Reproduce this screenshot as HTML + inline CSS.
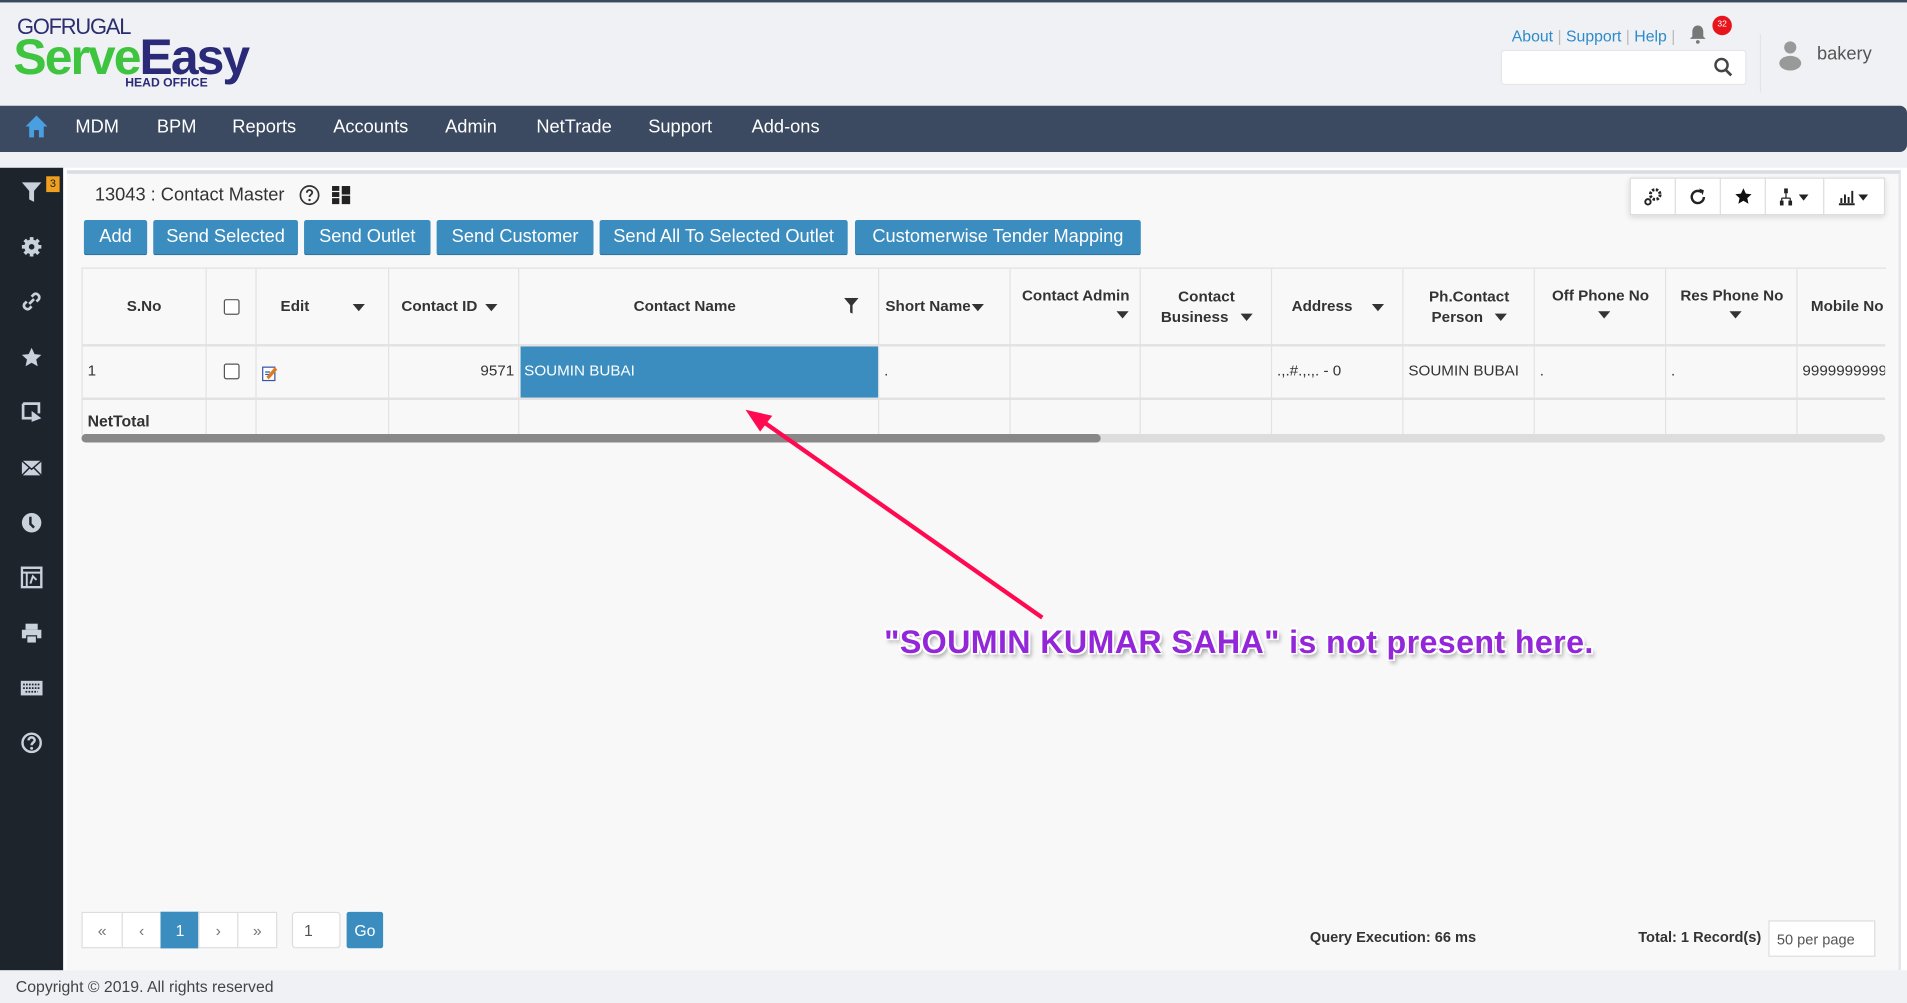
<!DOCTYPE html>
<html><head><meta charset="utf-8"><style>
html,body{margin:0;padding:0;width:1907px;height:1003px;overflow:hidden;background:#eff1f5}
#w{position:absolute;left:0;top:0;width:1568px;height:825px;transform:scale(1.21620,1.21576);transform-origin:0 0;font-family:"Liberation Sans",sans-serif;color:#333;background:#eff1f5}
.a{position:absolute}
.btn{position:absolute;top:181px;height:28px;background:#3a8dbe;color:#fff;font-size:15px;line-height:28px;text-align:center;border-radius:2px;border-bottom:1px solid #2c6f99}
.nav span{position:absolute;top:96px;color:#fff;font-size:15px}
.th{position:absolute;top:221px;height:63px;font-size:12.5px;font-weight:bold;color:#333;text-align:center;display:flex;align-items:center;justify-content:center;line-height:17px}
.vl{position:absolute;top:221px;height:136px;width:1px;background:#e2e2e2}
.tri{display:inline-block;border-left:5px solid transparent;border-right:5px solid transparent;border-top:6px solid #333;margin-left:6px;vertical-align:middle}
.td{position:absolute;top:298px;font-size:12.5px;color:#333}
.pg{position:absolute;top:750px;height:30px;border:1px solid #ddd;background:#fff;color:#777;font-size:13px;line-height:30px;text-align:center;box-sizing:border-box}
.si{position:absolute;left:17px;width:18px;height:18px}
.tb{position:absolute;top:146px;height:31px;border-right:1px solid #ddd;display:flex;align-items:center;justify-content:center}
</style></head><body><div id="w">
<div class="a" style="left:0;top:0;width:1568px;height:2px;background:#3b4a60"></div>
<div class="a" style="left:14px;top:12px;font-size:18px;color:#2b2d6e;letter-spacing:-1px">GOFRUGAL</div>
<div class="a" style="left:11px;top:25px;font-size:41px;font-weight:bold;letter-spacing:-1.6px;line-height:44px"><span style="color:#3ec43e">Serve</span><span style="color:#2b2a78">Easy</span></div>
<div class="a" style="left:103px;top:63px;font-size:10px;font-weight:bold;color:#2b2a78">HEAD OFFICE</div>
<div class="a" style="left:1243px;top:22px;font-size:13px;color:#2e8bc9">About <span style="color:#bbb">|</span> Support <span style="color:#bbb">|</span> Help <span style="color:#bbb">|</span></div>
<svg class="a" style="left:1389px;top:20px" width="14" height="16" viewBox="0 0 14 16"><path d="M7 1c3 0 4.5 2.5 4.5 5v4l2 2H.5l2-2V6C2.5 3.5 4 1 7 1z" fill="#777"/><circle cx="7" cy="14.5" r="1.5" fill="#777"/></svg>
<div class="a" style="left:1408px;top:13px;width:16px;height:16px;border-radius:8px;background:#e8141b;color:#fff;font-size:7px;line-height:16px;text-align:center">32</div>
<div class="a" style="left:1234px;top:41px;width:202px;height:29px;background:#fff;border:1px solid #e4e6ea;border-radius:3px;box-sizing:border-box"></div>
<svg class="a" style="left:1409px;top:47px" width="16" height="17" viewBox="0 0 16 17"><circle cx="6.5" cy="6.5" r="5" stroke="#444" stroke-width="2" fill="none"/><path d="M10 10.5l4.5 4.5" stroke="#444" stroke-width="2.2"/></svg>
<div class="a" style="left:1447px;top:28px;width:1px;height:48px;background:#e2e4e8"></div>
<svg class="a" style="left:1462px;top:33px" width="20" height="25" viewBox="0 0 20 25"><circle cx="10" cy="6" r="5" fill="#999"/><ellipse cx="10" cy="19" rx="9" ry="6" fill="#999"/></svg>
<div class="a" style="left:1494px;top:36px;font-size:15px;color:#555">bakery</div>
<div class="a nav" style="left:0;top:87px;width:1568px;height:38px;background:#3b4a60;border-radius:0 6px 6px 0"></div>
<svg class="a" style="left:20px;top:94px" width="20" height="20" viewBox="0 0 20 20"><path d="M10 1L1 10h3v9h4v-6h4v6h4v-9h3z" fill="#4a9fe0"/></svg>
<div class="nav"><span style="left:62px">MDM</span><span style="left:129px">BPM</span><span style="left:191px">Reports</span><span style="left:274px">Accounts</span><span style="left:366px">Admin</span><span style="left:441px">NetTrade</span><span style="left:533px">Support</span><span style="left:618px">Add-ons</span></div>
<div class="a" style="left:0;top:138px;width:52px;height:660px;background:#1e242b"></div>
<div class="a" style="left:52px;top:138px;width:1516px;height:660px;background:#fff"></div>
<svg class="si" style="top:149px" viewBox="0 0 18 18"><path d="M1 1h16l-6 7v9l-4-2V8z" fill="#c9d2dc"/></svg>
<div class="a" style="left:38px;top:145px;width:11px;height:13px;background:#f0a020;color:#222;font-size:9px;text-align:center;line-height:13px">3</div>
<svg class="si" style="top:194px" viewBox="0 0 18 18"><circle cx="9" cy="9" r="6" fill="#c9d2dc"/><path d="M9 1v16M1 9h16M3.3 3.3l11.4 11.4M14.7 3.3L3.3 14.7" stroke="#c9d2dc" stroke-width="3"/><circle cx="9" cy="9" r="2.3" fill="#1e242b"/></svg>
<svg class="si" style="top:239px" viewBox="0 0 18 18"><path d="M7 11l4-4M5 9l-2 2a3 3 0 004 4l2-2M13 9l2-2a3 3 0 00-4-4L9 5" stroke="#c9d2dc" stroke-width="2.2" fill="none"/></svg>
<svg class="si" style="top:285px" viewBox="0 0 18 18"><path d="M9 1l2.4 5.3 5.6.6-4.2 3.8 1.2 5.6L9 13.4 4 16.3l1.2-5.6L1 6.9l5.6-.6z" fill="#c9d2dc"/></svg>
<svg class="si" style="top:330px" viewBox="0 0 18 18"><path d="M2 2h13v8M2 2v12h7" stroke="#c9d2dc" stroke-width="2.2" fill="none"/><path d="M9 8l8 6-8 3z" fill="#c9d2dc"/></svg>
<svg class="si" style="top:376px" viewBox="0 0 18 18"><rect x="1" y="3" width="16" height="12" fill="#c9d2dc"/><path d="M1 3l8 7 8-7M1 15l6-6M17 15l-6-6" stroke="#1e242b" stroke-width="1.2" fill="none"/></svg>
<svg class="si" style="top:421px" viewBox="0 0 18 18"><circle cx="9" cy="9" r="8" fill="#c9d2dc"/><path d="M8 4v6l3 3" stroke="#1e242b" stroke-width="2" fill="none"/></svg>
<svg class="si" style="top:466px" viewBox="0 0 18 18"><rect x="1" y="1" width="16" height="16" stroke="#c9d2dc" stroke-width="2" fill="none"/><path d="M1 5h16M5 5v12M8 14l2-6 3 3" stroke="#c9d2dc" stroke-width="1.6" fill="none"/></svg>
<svg class="si" style="top:512px" viewBox="0 0 18 18"><rect x="4" y="1" width="10" height="5" fill="#c9d2dc"/><rect x="1" y="6" width="16" height="7" fill="#c9d2dc"/><rect x="5" y="11" width="8" height="6" fill="#c9d2dc" stroke="#1e242b"/></svg>
<svg class="si" style="top:557px" viewBox="0 0 18 18"><rect x="0" y="3" width="18" height="12" fill="#c9d2dc"/><path d="M2 6h14M2 9h14M4 12h10" stroke="#1e242b" stroke-dasharray="1.4 1" stroke-width="1.4"/></svg>
<svg class="si" style="top:602px" viewBox="0 0 18 18"><circle cx="9" cy="9" r="7.5" stroke="#c9d2dc" stroke-width="2" fill="none"/><path d="M6.5 7a2.5 2.5 0 115 0c0 1.5-2.5 2-2.5 4" stroke="#c9d2dc" stroke-width="2" fill="none"/><circle cx="9" cy="13.5" r="1.2" fill="#c9d2dc"/></svg>
<div class="a" style="left:55px;top:140px;width:1508px;height:658px;background:#f8f8f8;border-top:3px solid #d9dde2;border-right:2px solid #e4e6ea;box-sizing:border-box"></div>
<div class="a" style="left:78px;top:152px;font-size:15px;color:#333">13043 : Contact Master</div>
<svg class="a" style="left:246px;top:152px" width="17" height="17" viewBox="0 0 17 17"><circle cx="8.5" cy="8.5" r="7.5" stroke="#333" stroke-width="1.4" fill="none"/><path d="M6.3 6.5a2.2 2.2 0 114.4 0c0 1.4-2.2 1.8-2.2 3.5" stroke="#333" stroke-width="1.5" fill="none"/><circle cx="8.5" cy="12.5" r="1" fill="#333"/></svg>
<svg class="a" style="left:273px;top:153px" width="15" height="15" viewBox="0 0 15 15"><rect x="0" y="0" width="6" height="4" fill="#222"/><rect x="0" y="5" width="6" height="4" fill="#222"/><rect x="0" y="10" width="6" height="5" fill="#222"/><rect x="8" y="0" width="7" height="7" fill="#222"/><rect x="8" y="8" width="7" height="7" fill="#222"/></svg>
<div class="a" style="left:1340px;top:146px;width:210px;height:31px;background:#fff;border:1px solid #ddd;box-shadow:0 2px 5px rgba(0,0,0,.15);box-sizing:border-box"></div>
<div class="tb" style="left:1340px;width:37px"><svg width="16" height="16" viewBox="0 0 16 16"><circle cx="10" cy="6" r="4" fill="none" stroke="#222" stroke-width="2.4" stroke-dasharray="2 1.2"/><circle cx="4" cy="12" r="2.2" fill="none" stroke="#222" stroke-width="1.6"/></svg></div>
<div class="tb" style="left:1378px;width:36px"><svg width="16" height="16" viewBox="0 0 16 16"><path d="M13 8a5 5 0 11-2-4" stroke="#222" stroke-width="2" fill="none"/><path d="M9 1l4 1.5-1 4z" fill="#222"/></svg></div>
<div class="tb" style="left:1415px;width:36px"><svg width="15" height="15" viewBox="0 0 18 18"><path d="M9 1l2.4 5.3 5.6.6-4.2 3.8 1.2 5.6L9 13.4 4 16.3l1.2-5.6L1 6.9l5.6-.6z" fill="#111"/></svg></div>
<div class="tb" style="left:1452px;width:47px"><svg width="26" height="16" viewBox="0 0 26 16"><rect x="4" y="1" width="3" height="4" fill="#222"/><path d="M5.5 5v4M2 9h7M2 9v2M9 9v2" stroke="#222"/><rect x="0.5" y="11" width="3" height="4" fill="#222"/><rect x="7.5" y="11" width="3" height="4" fill="#222"/><path d="M16 6h8l-4 5z" fill="#222"/></svg></div>
<div class="tb" style="left:1500px;width:49px;border:none"><svg width="28" height="16" viewBox="0 0 28 16"><path d="M1 14h13M3 13V9M6 13V6M9 13V8M12 13V3" stroke="#222" stroke-width="1.6"/><path d="M17 6h8l-4 5z" fill="#222"/></svg></div>
<div class="btn" style="left:69px;width:52px">Add</div>
<div class="btn" style="left:126px;width:119px">Send Selected</div>
<div class="btn" style="left:250px;width:104px">Send Outlet</div>
<div class="btn" style="left:359px;width:129px">Send Customer</div>
<div class="btn" style="left:493px;width:204px">Send All To Selected Outlet</div>
<div class="btn" style="left:703px;width:235px">Customerwise Tender Mapping</div>
<div class="a" style="left:67px;top:220px;width:1483px;height:137px;background:#f8f8f8;border-top:1px solid #e2e2e2;border-left:1px solid #e2e2e2"></div>
<div class="a" style="left:67px;top:283px;width:1483px;height:2px;background:#e2e2e2"></div>
<div class="a" style="left:67px;top:327px;width:1483px;height:2px;background:#e2e2e2"></div>
<div class="vl" style="left:169px"></div><div class="vl" style="left:210px"></div><div class="vl" style="left:319px"></div><div class="vl" style="left:426px"></div><div class="vl" style="left:722px"></div><div class="vl" style="left:830px"></div><div class="vl" style="left:937px"></div><div class="vl" style="left:1045px"></div><div class="vl" style="left:1153px"></div><div class="vl" style="left:1261px"></div><div class="vl" style="left:1369px"></div><div class="vl" style="left:1477px"></div>
<div class="a" style="left:428px;top:285px;width:294px;height:42px;background:#3a8dbe"></div>
<div class="th" style="left:67px;width:103px">S.No</div>
<div class="th" style="left:170px;width:41px"><span style="width:11px;height:11px;border:1px solid #555;border-radius:2px;background:#fff;display:inline-block"></span></div>
<div class="th" style="left:211px;width:109px"><span style="margin-right:30px">Edit</span><span class="tri"></span></div>
<div class="th" style="left:320px;width:107px;justify-content:flex-start;padding-left:10px">Contact ID<span class="tri"></span></div>
<div class="th" style="left:427px;width:272px">Contact Name</div>
<svg class="a" style="left:694px;top:245px" width="12" height="13" viewBox="0 0 12 13"><path d="M0 0h12L7 6v7L5 12V6z" fill="#333"/></svg>
<div class="th" style="left:723px;width:108px;justify-content:flex-start;padding-left:5px">Short Name<span class="tri" style="margin-left:1px"></span></div>
<div class="th" style="left:831px;width:107px;flex-direction:column;justify-content:flex-start;padding-top:14px;box-sizing:border-box"><span>Contact Admin</span><span style="align-self:flex-end;margin-right:10px;margin-top:4px" class="tri"></span></div>
<div class="th" style="left:938px;width:108px;flex-direction:column"><span>Contact</span><span>Business <span class="tri"></span></span></div>
<div class="th" style="left:1046px;width:108px">Address<span class="tri" style="margin-left:16px"></span></div>
<div class="th" style="left:1154px;width:108px;flex-direction:column"><span>Ph.Contact</span><span>Person <span class="tri"></span></span></div>
<div class="th" style="left:1262px;width:108px;flex-direction:column;justify-content:flex-start;padding-top:14px;box-sizing:border-box"><span>Off Phone No</span><span class="tri" style="margin-top:4px"></span></div>
<div class="th" style="left:1370px;width:108px;flex-direction:column;justify-content:flex-start;padding-top:14px;box-sizing:border-box"><span>Res Phone No</span><span class="tri" style="margin-top:4px"></span></div>
<div class="th" style="left:1478px;width:72px;justify-content:flex-start;padding-left:11px">Mobile No</div>
<div class="td" style="left:72px">1</div>
<div class="a" style="left:184px;top:299px;width:11px;height:11px;border:1px solid #555;border-radius:2px;background:#fff"></div>
<svg class="a" style="left:215px;top:300px" width="14" height="14" viewBox="0 0 14 14"><rect x="1" y="2" width="10" height="11" fill="#fff" stroke="#3355aa"/><path d="M4 10l7-8 2 2-7 8z" fill="#e07a20"/><path d="M3 6h4M3 8h3" stroke="#3355aa"/></svg>
<div class="td" style="left:395px">9571</div>
<div class="td" style="left:431px;color:#fff">SOUMIN BUBAI</div>
<div class="td" style="left:727px">.</div>
<div class="td" style="left:1050px">.,.#.,.,. - 0</div>
<div class="td" style="left:1158px">SOUMIN BUBAI</div>
<div class="td" style="left:1266px">.</div>
<div class="td" style="left:1374px">.</div>
<div class="td" style="left:1482px;width:68px;overflow:hidden;white-space:nowrap">9999999999</div>
<div class="a" style="left:72px;top:339px;font-size:13px;font-weight:bold;color:#333">NetTotal</div>
<div class="a" style="left:67px;top:357px;width:1483px;height:7px;background:#ddd;border-radius:4px"></div>
<div class="a" style="left:67px;top:357px;width:838px;height:7px;background:#888;border-radius:4px"></div>
<svg class="a" style="left:0;top:0" width="1568" height="825"><path d="M857 508L622 343" stroke="#ff0a50" stroke-width="3.5"/><path d="M613 337l22 5-10 13z" fill="#ff0a50"/></svg>
<div class="a" style="left:727px;top:513px;font-size:26.5px;font-weight:bold;color:#9226d8;letter-spacing:0.3px;white-space:nowrap;text-shadow:-1.5px -1.5px 0 #fff,1.5px -1.5px 0 #fff,-1.5px 1.5px 0 #fff,1.5px 1.5px 0 #fff,2px 3px 4px rgba(0,0,0,.4)">"SOUMIN KUMAR SAHA" is not present here.</div>
<div class="pg" style="left:67px;width:34px">«</div>
<div class="pg" style="left:100px;width:33px">‹</div>
<div class="pg" style="left:132px;width:32px;background:#3a8dbe;color:#fff;border-color:#3a8dbe">1</div>
<div class="pg" style="left:163px;width:33px">›</div>
<div class="pg" style="left:195px;width:33px">»</div>
<div class="pg" style="left:240px;width:40px;text-align:left;padding-left:9px;border-radius:3px;color:#555">1</div>
<div class="pg" style="left:285px;width:30px;background:#3a8dbe;color:#fff;border-color:#3a8dbe;border-radius:2px">Go</div>
<div class="a" style="left:1077px;top:764px;font-size:12px;font-weight:bold;color:#333">Query Execution: 66 ms</div>
<div class="a" style="left:1347px;top:764px;font-size:12px;font-weight:bold;color:#333">Total: 1 Record(s)</div>
<div class="a" style="left:1454px;top:757px;width:88px;height:30px;border:1px solid #ddd;background:#fff;box-sizing:border-box;font-size:12px;color:#555;line-height:30px;padding-left:6px">50 per page</div>
<div class="a" style="left:13px;top:804px;font-size:13px;color:#444">Copyright © 2019. All rights reserved</div>
</div></body></html>
